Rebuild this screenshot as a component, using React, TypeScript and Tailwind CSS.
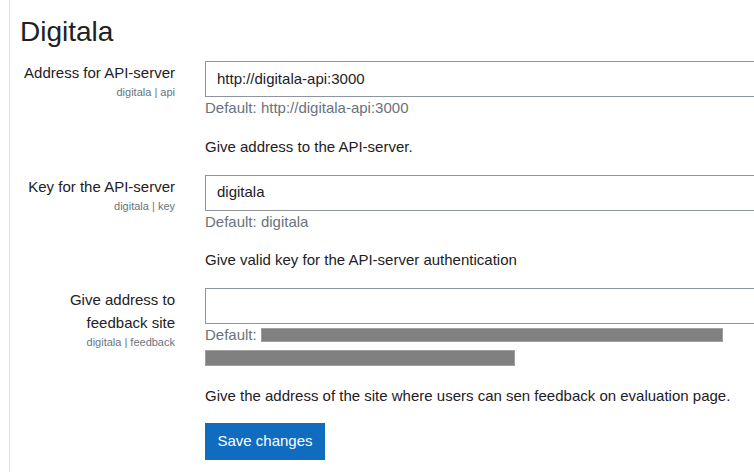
import React from "react";

type Setting = {
  label: string[];
  id: string;
  value: string;
  def?: string;
  redacted?: boolean;
  desc: string;
};

const settings: Setting[] = [
  {
    label: ["Address for API-server"],
    id: "digitala | api",
    value: "http://digitala-api:3000",
    def: "http://digitala-api:3000",
    desc: "Give address to the API-server.",
  },
  {
    label: ["Key for the API-server"],
    id: "digitala | key",
    value: "digitala",
    def: "digitala",
    desc: "Give valid key for the API-server authentication",
  },
  {
    label: ["Give address to", "feedback site"],
    id: "digitala | feedback",
    value: "",
    redacted: true,
    desc: "Give the address of the site where users can sen feedback on evaluation page.",
  },
];

function SettingRow({ s }: { s: Setting }) {
  return (
    <div className="flex">
      {/* label column */}
      <div className="w-[155px] shrink-0 text-right">
        {s.label.map((l) => (
          <div key={l} className="leading-[23px]">
            {l}
          </div>
        ))}
        <div className="text-[11px] leading-[15px] mt-[1px] text-[#6a737b]">{s.id}</div>
      </div>

      {/* field column */}
      <div className="ml-[30px] w-[620px] shrink-0">
        <div className="h-[36px] border border-[#8f959e] px-[11px] flex items-center">
          {s.value}
        </div>
        {s.redacted ? (
          <div className="text-[#6a737b]">
            <div className="flex items-center h-[22.5px]">
              Default:
              <span className="ml-[4px] inline-block w-[462px] h-[14px] bg-[#808080] border border-[#a0a0a0]" />
            </div>
            <div className="flex items-center h-[22.5px]">
              <span className="inline-block w-[310px] h-[16px] bg-[#808080] border border-[#a0a0a0]" />
            </div>
          </div>
        ) : (
          <div className="text-[#6a737b] leading-[22.5px]">Default: {s.def}</div>
        )}
        <div className="mt-[16px] leading-[22.5px]">{s.desc}</div>
      </div>
    </div>
  );
}

export default function App() {
  return (
    <div
      className="w-[754px] h-[472px] overflow-hidden bg-white text-[15px] text-[#1d2125]"
      style={{ fontFamily: '"Liberation Sans", Arial, sans-serif' }}
    >
      <div className="ml-[9px] h-full border-l border-[#dee2e6] pl-[10px] pt-[15px]">
        <h2 className="text-[28px] leading-[34px] mb-[12px]">Digitala</h2>
        <div className="flex flex-col gap-[16.5px]">
          {settings.map((s) => (
            <SettingRow key={s.id} s={s} />
          ))}
        </div>
        <div className="ml-[185px] mt-[15px]">
          <button className="h-[37px] w-[120px] bg-[#0f6cbf] text-white">Save changes</button>
        </div>
      </div>
    </div>
  );
}
